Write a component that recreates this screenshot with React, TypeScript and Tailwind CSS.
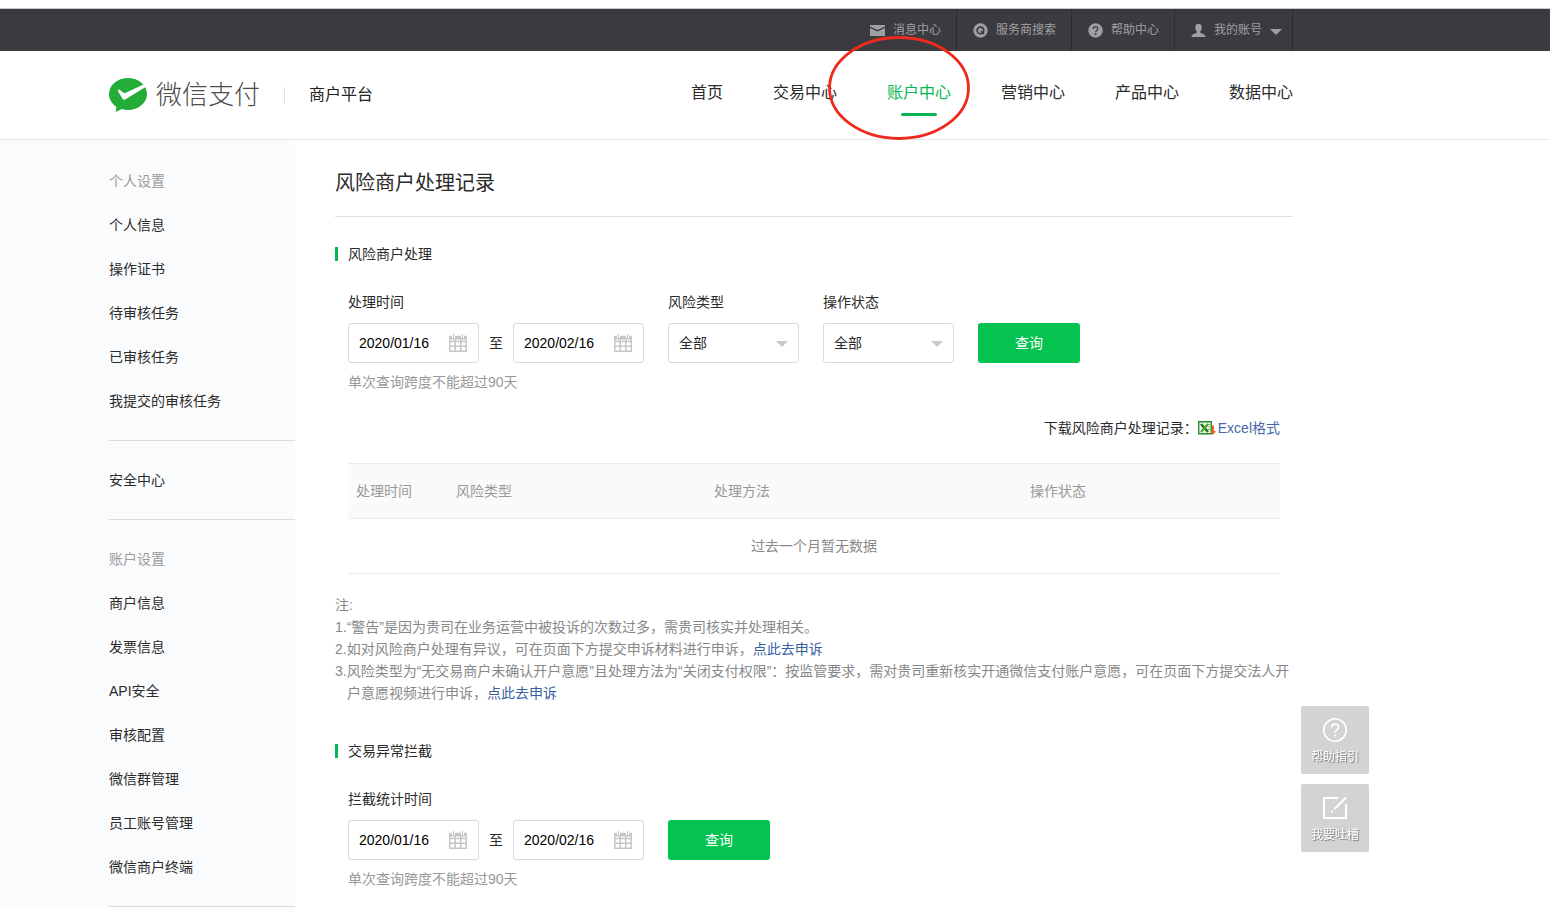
import { useState } from "react";

type DateRange = {
  start: string;
  end: string;
};

const navItems = ["首页", "交易中心", "账户中心", "营销中心", "产品中心", "数据中心"];

const menuGroups = [
  {
    title: "个人设置",
    items: ["个人信息", "操作证书", "待审核任务", "已审核任务", "我提交的审核任务"],
  },
  { title: "", items: ["安全中心"] },
  {
    title: "账户设置",
    items: [
      "商户信息",
      "发票信息",
      "API安全",
      "审核配置",
      "微信群管理",
      "员工账号管理",
      "微信商户终端",
    ],
  },
];

const MailIcon = () => (
  <svg width="15" height="15" viewBox="0 0 15 15" fill="currentColor">
    <path d="M0 2h15v1.6L7.5 7 0 3.6z" />
    <path d="M0 5l7.5 3.4L15 5v8H0z" />
  </svg>
);

const SearchIcon = () => (
  <svg width="15" height="15" viewBox="0 0 15 15">
    <circle cx="7.5" cy="7.5" r="7.2" fill="currentColor" />
    <circle cx="7.4" cy="7.4" r="3.3" fill="none" stroke="#3a3a3f" strokeWidth="1.6" />
    <path d="M8 8l3 3" stroke="#3a3a3f" strokeWidth="1.6" />
  </svg>
);

const HelpIcon = () => (
  <svg width="15" height="15" viewBox="0 0 15 15">
    <circle cx="7.5" cy="7.5" r="7.2" fill="currentColor" />
    <path
      d="M5.3 5.9C5.3 2.9 9.8 3 9.8 5.8c0 1.6-2.2 1.7-2.2 3.5"
      fill="none"
      stroke="#3a3a3f"
      strokeWidth="1.3"
    />
    <circle cx="7.6" cy="11.2" r=".9" fill="#3a3a3f" />
  </svg>
);

const UserIcon = () => (
  <svg width="15" height="15" viewBox="0 0 15 15" fill="currentColor">
    <path d="M7.5.8c2.1 0 3.3 1.5 3.3 3.6 0 1.7-.8 3.2-1.7 4v1.2c0 .9 5.4 1.2 5.4 4.4H.5c0-3.2 5.4-3.5 5.4-4.4V8.4c-.9-.8-1.7-2.3-1.7-4C4.2 2.3 5.4.8 7.5.8z" />
  </svg>
);

const Caret = ({ className }: { className: string }) => (
  <svg width="12" height="6" viewBox="0 0 12 6" className={className}>
    <path d="M0 0h12L6 6z" fill="currentColor" />
  </svg>
);

const CalendarIcon = () => (
  <svg
    width="18"
    height="18"
    viewBox="0 0 18 18"
    fill="none"
    stroke="#c6c6c6"
    className="pointer-events-none absolute top-[11px] right-3"
  >
    <path
      d="M.8 2.5h16.4v14.7H.8zM.8 7.5h16.4M.8 12.3h16.4M6.2 5v12M11.8 5v12"
      strokeWidth="1.5"
    />
    <path d="M1 4h16" strokeWidth="3" />
    <path d="M4.5 0v4M13.5 0v4" stroke="#fff" strokeWidth="3" />
    <path d="M4.5 0v4M13.5 0v4" />
  </svg>
);

const ExcelIcon = () => (
  <svg width="18" height="16" viewBox="0 0 18 16">
    <path d="M.7 1.7h12.6v12H.7z" fill="#eef8e8" stroke="#2f8a2b" strokeWidth="1.4" />
    <path d="M8.5 4.5h4M9.5 7h3M9.5 9.5h3" stroke="#7cbc6c" />
    <path d="M3 4l7 8" stroke="#1f7a1c" strokeWidth="2.6" />
    <path d="M10 4l-7 8" stroke="#4aa53c" strokeWidth="2" />
    <path d="M15 5.5v8" stroke="#f0641e" strokeWidth="2" />
    <path d="M12 11h6l-3 4z" fill="#f0641e" />
  </svg>
);

const Logo = () => (
  <svg width="38" height="34" viewBox="0 0 38 34">
    <path
      d="M19 0c10.5 0 19 7.1 19 16s-8.5 16-19 16c-2.2 0-4.3-.3-6.3-.9L6.6 34l.8-5.2C2.9 25.9 0 21.2 0 16 0 7.1 8.5 0 19 0z"
      fill="#22ac38"
    />
    <path
      d="M9 12.2c.5-.9 1.2-.8 1.9-.3l3.6 2.8c.8.5 1.4.5 2.3.1L35.5 6l1.500 2.800-20.800 12.600c-1.200.7-2.200.4-2.800-.8L9.100 13.400z"
      fill="#fff"
    />
  </svg>
);

const TopBar = () => (
  <div className="h-[42px] bg-[#3a3a3f]">
    <div className="ml-[109px] flex h-full max-w-[1184px] justify-end text-xs text-[#a0a0a3]">
      {[
        { label: "消息中心", icon: <MailIcon /> },
        { label: "服务商搜索", icon: <SearchIcon /> },
        { label: "帮助中心", icon: <HelpIcon /> },
      ].map((item) => (
        <a
          key={item.label}
          href="#"
          className="flex items-center gap-2 border-r border-[#2c2c31] pr-[15px] pl-4"
        >
          {item.icon}
          {item.label}
        </a>
      ))}
      <button
        type="button"
        className="flex items-center gap-2 border-r border-[#2c2c31] pr-[10px] pl-4"
      >
        <UserIcon />
        我的账号
        <Caret className="mt-1" />
      </button>
    </div>
  </div>
);

const Header = () => (
  <header className="border-b border-[#e7e7eb] bg-white">
    <div className="ml-[109px] flex h-[88px] max-w-[1184px] items-center justify-between">
      <div className="flex items-center">
        <Logo />
        <span className="ml-[9px] text-[26px] leading-8 font-light text-[#4c4c4c]">
          微信支付
        </span>
        <span className="ml-6 h-[17px] border-l border-[#e0e0e0]" />
        <span className="ml-6 text-base text-[#222]">商户平台</span>
      </div>
      <nav className="flex gap-[50px] pb-1 text-base">
        {navItems.map((item) =>
          item === "账户中心" ? (
            <a key={item} href="#" className="relative text-[#07b652]">
              {item}
              <span className="absolute top-8 left-[14px] h-[3px] w-9 rounded-full bg-[#07b652]" />
              {/* red marker around the current tab */}
              <svg
                width="144"
                height="106"
                viewBox="0 0 144 106"
                className="pointer-events-none absolute -top-[46px] -left-[60px] z-10 max-w-none"
              >
                <ellipse
                  cx="72"
                  cy="53"
                  rx="69.5"
                  ry="50.5"
                  fill="none"
                  stroke="#ee2a1c"
                  strokeWidth="2.8"
                />
              </svg>
            </a>
          ) : (
            <a key={item} href="#" className="text-[#2b2b2b]">
              {item}
            </a>
          )
        )}
      </nav>
    </div>
  </header>
);

const Sidebar = () => (
  <aside className="w-[295px] shrink-0 bg-[#fafbfd] pt-0.5 pl-[109px]">
    {menuGroups.map((group, i) => (
      <ul key={i} className="border-b border-[#d9dcdf] py-[17px] text-sm leading-[44px]">
        {group.title && <li className="text-[#9a9a9a]">{group.title}</li>}
        {group.items.map((item) => (
          <li key={item}>
            <a href="#" className="text-[#2b2b2b]">
              {item}
            </a>
          </li>
        ))}
      </ul>
    ))}
  </aside>
);

const SectionTitle = ({ children }: { children: string }) => (
  <h2 className="flex items-center gap-[10px] text-sm leading-[22px] text-[#2b2b2b]">
    <span className="h-[14px] w-[3px] bg-[#07b652]" />
    {children}
  </h2>
);

const DateField = ({
  id,
  label,
  value,
  onChange,
}: {
  id: string;
  label?: string;
  value: string;
  onChange: (value: string) => void;
}) => (
  <div className="relative">
    <input
      id={id}
      type="text"
      aria-label={label}
      value={value}
      onChange={(e) => onChange(e.target.value)}
      className="block h-10 w-[131px] rounded-[3px] border border-[#d9dadc] bg-white pr-8 pl-[10px] text-sm text-black outline-none"
    />
    <CalendarIcon />
  </div>
);

const DateRangeFields = ({ id, label }: { id: string; label: string }) => {
  const [range, setRange] = useState<DateRange>({
    start: "2020/01/16",
    end: "2020/02/16",
  });

  return (
    <div>
      <label htmlFor={id} className="block text-[#2b2b2b]">
        {label}
      </label>
      <div className="mt-[10px] flex items-center">
        <DateField
          id={id}
          value={range.start}
          onChange={(start) => setRange((prev) => ({ ...prev, start }))}
        />
        <span className="w-[34px] text-center text-[#2b2b2b]">至</span>
        <DateField
          id={`${id}-end`}
          label="结束日期"
          value={range.end}
          onChange={(end) => setRange((prev) => ({ ...prev, end }))}
        />
      </div>
      <p className="mt-2 text-[#999]">单次查询跨度不能超过90天</p>
    </div>
  );
};

const SelectField = ({ id, label }: { id: string; label: string }) => (
  <div>
    <label htmlFor={id} className="block text-[#2b2b2b]">
      {label}
    </label>
    <div className="relative mt-[10px]">
      <select
        id={id}
        className="block h-10 w-[131px] appearance-none rounded-[3px] border border-[#d9dadc] bg-white px-[10px] text-sm text-[#2b2b2b] outline-none"
      >
        <option>全部</option>
      </select>
      <Caret className="pointer-events-none absolute top-[18px] right-[11px] text-[#c8c8c8]" />
    </div>
  </div>
);

const QueryButton = () => (
  <button
    type="submit"
    className="mt-8 h-10 w-[102px] rounded-[3px] bg-[#04c350] text-sm text-white"
  >
    查询
  </button>
);

const FloatingTools = () => (
  <div className="fixed right-[181px] bottom-14 flex flex-col gap-[10px] text-xs text-white">
    <button
      type="button"
      className="flex size-[68px] flex-col items-center gap-[7px] rounded-xs bg-[#d3d3d3] pt-3 text-shadow-[1px_1px_1px_#777]"
    >
      <svg width="24" height="24" viewBox="0 0 24 24" fill="none" stroke="#fff">
        <circle cx="12" cy="12" r="11.2" strokeWidth="1.6" />
        <path d="M8.5 9.6c0-4.6 7-4.5 7-.4 0 2.7-3.5 2.7-3.5 5.6" strokeWidth="1.6" />
        <path d="M12 16.5v2" strokeWidth="1.8" />
      </svg>
      帮助指引
    </button>
    <button
      type="button"
      className="flex size-[68px] flex-col items-center gap-[7px] rounded-xs bg-[#d3d3d3] pt-3 text-shadow-[1px_1px_1px_#777]"
    >
      <svg width="24" height="24" viewBox="0 0 24 24" fill="none" stroke="#fff" strokeWidth="2">
        <path d="M15 2H1v20h22V8" />
        <path d="M23 1.5L11.5 13" strokeWidth="2.2" />
        <path d="M8 15.5h2" />
      </svg>
      我要吐槽
    </button>
  </div>
);

const App = () => {
  const handleSubmit = (e: React.FormEvent) => {
    e.preventDefault();
  };

  return (
    <div className="flex min-h-screen flex-col bg-white pt-2 font-['Liberation_Sans','Noto_Sans_CJK_SC',sans-serif]">
      <div className="border-t border-[#c9c9cc]">
        <TopBar />
      </div>
      <Header />
      <div className="flex grow">
        <Sidebar />
        <main className="ml-10 max-w-[958px] grow text-sm leading-[22px]">
          <h1 className="border-b border-[#e0e0e0] pt-[29px] pb-[19px] text-xl leading-7 text-[#2b2b2b]">
            风险商户处理记录
          </h1>

          <section className="mt-[26px]">
            <SectionTitle>风险商户处理</SectionTitle>
            <form className="mt-[26px] ml-[13px] flex gap-6" onSubmit={handleSubmit}>
              <DateRangeFields id="handle-date" label="处理时间" />
              <SelectField id="risk-type" label="风险类型" />
              <SelectField id="status" label="操作状态" />
              <QueryButton />
            </form>

            <div className="mx-[13px] mt-6 flex items-center justify-end text-[#2b2b2b]">
              下载风险商户处理记录：
              <a href="#" className="flex items-center gap-0.5 text-[#4a68a8]">
                <ExcelIcon />
                Excel格式
              </a>
            </div>

            <div className="mx-[13px] mt-6">
              <table className="w-full table-fixed text-left">
                <thead className="bg-[#fafafa] text-[#999]">
                  <tr className="h-[55px] border-y border-[#ebebeb]">
                    <th className="w-[100px] px-2 font-normal">处理时间</th>
                    <th className="w-[258px] px-2 font-normal">风险类型</th>
                    <th className="px-2 font-normal">处理方法</th>
                    <th className="w-[258px] px-2 font-normal">操作状态</th>
                  </tr>
                </thead>
                <tbody>
                  <tr className="h-[55px] border-b border-[#ebebeb]">
                    <td colSpan={4} className="text-center text-[#888]">
                      过去一个月暂无数据
                    </td>
                  </tr>
                </tbody>
              </table>
            </div>
          </section>

          <div className="mt-5 text-[#888]">
            <p>注:</p>
            <p>1.“警告”是因为贵司在业务运营中被投诉的次数过多，需贵司核实并处理相关。</p>
            <p>
              2.如对风险商户处理有异议，可在页面下方提交申诉材料进行申诉，
              <a href="#" className="text-[#3a5fa0]">
                点此去申诉
              </a>
            </p>
            <p className="pl-3 -indent-3">
              3.风险类型为“无交易商户未确认开户意愿”且处理方法为“关闭支付权限”：按监管要求，需对贵司重新核实开通微信支付账户意愿，可在页面下方提交法人开户意愿视频进行申诉，
              <a href="#" className="text-[#3a5fa0]">
                点此去申诉
              </a>
            </p>
          </div>

          <section className="mt-9">
            <SectionTitle>交易异常拦截</SectionTitle>
            <form className="mt-[26px] ml-[13px] flex gap-6" onSubmit={handleSubmit}>
              <DateRangeFields id="block-date" label="拦截统计时间" />
              <QueryButton />
            </form>
          </section>
        </main>
      </div>
      <FloatingTools />
    </div>
  );
};

export default App;
